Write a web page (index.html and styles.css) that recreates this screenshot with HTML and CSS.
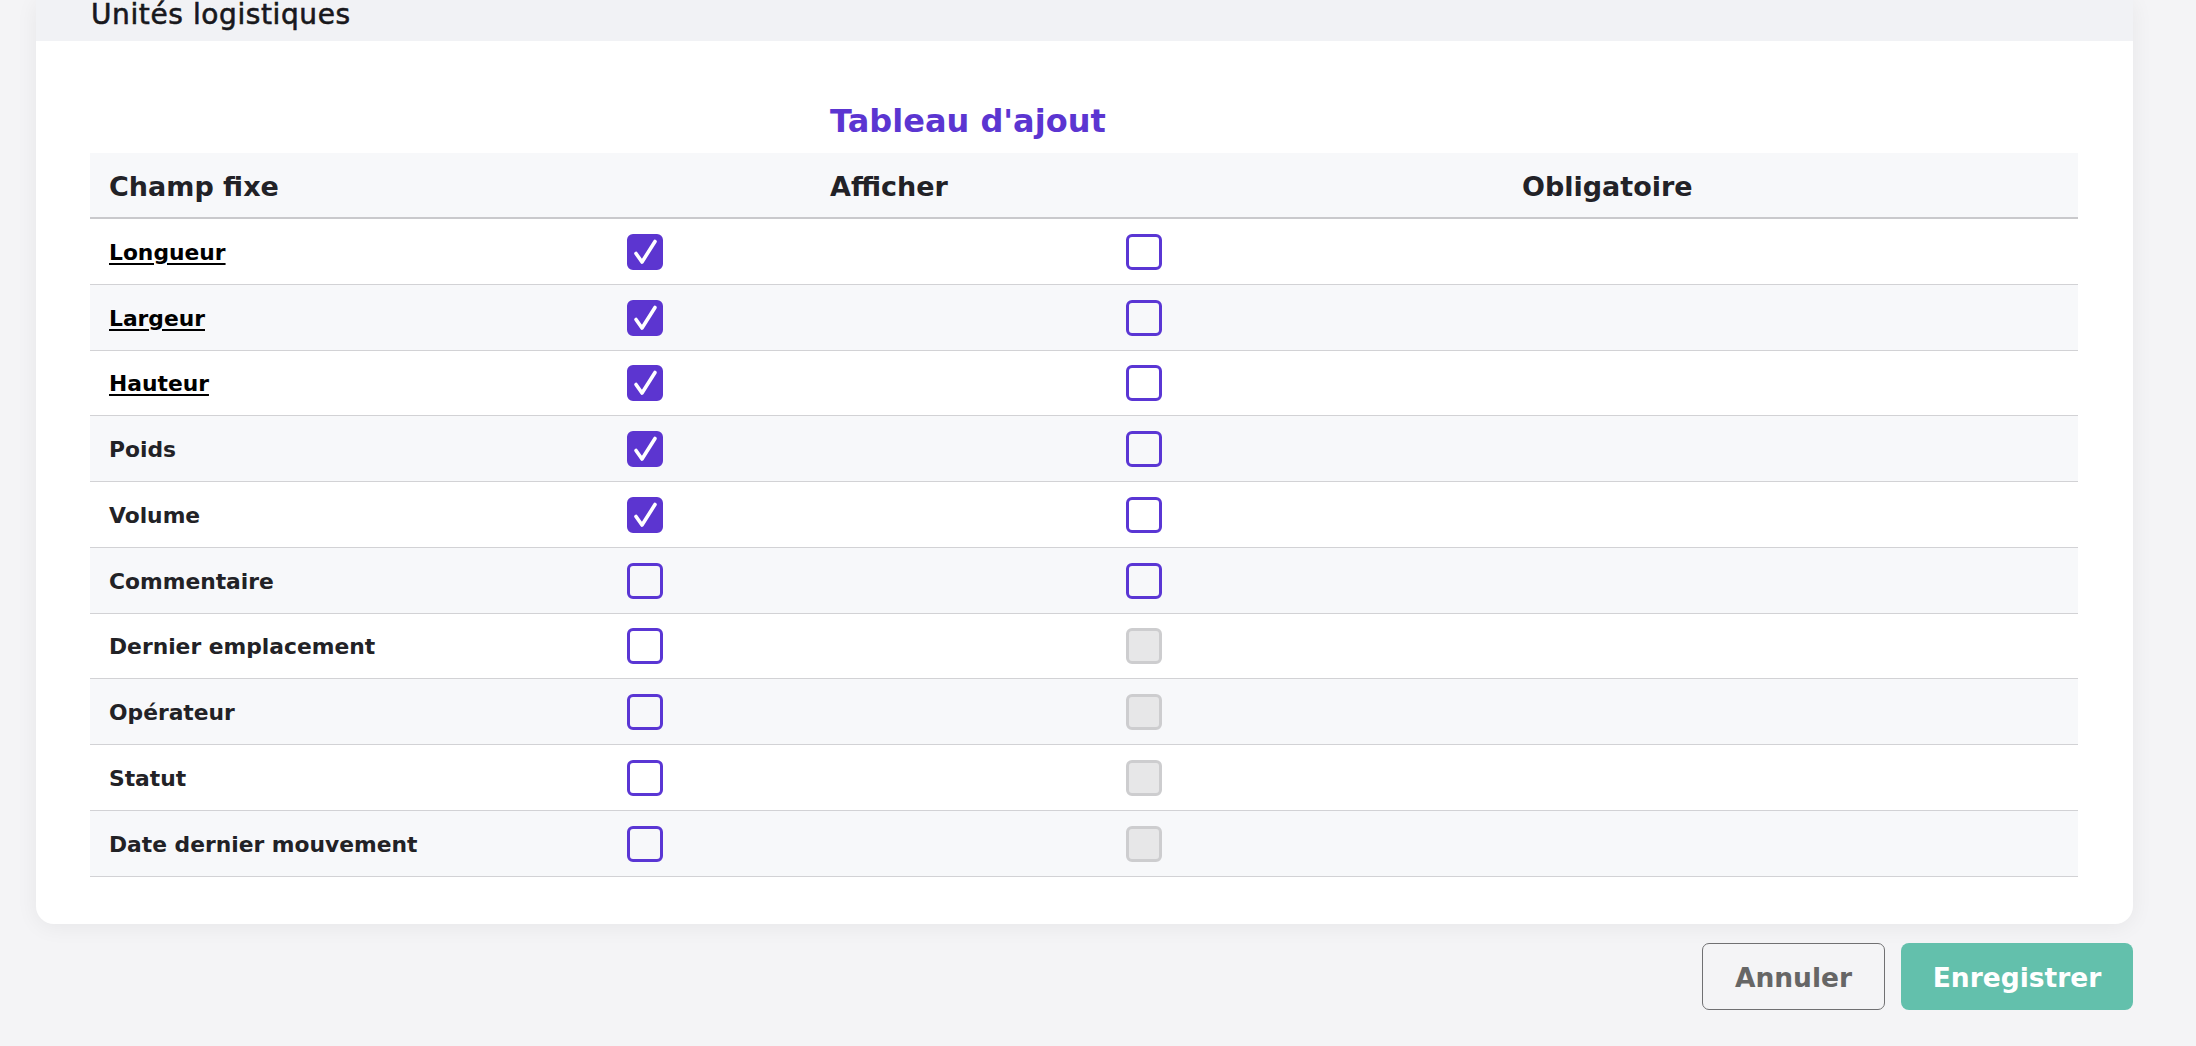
FILE: index.html
```html
<!DOCTYPE html>
<html lang="fr">
<head>
<meta charset="utf-8">
<title>Unités logistiques</title>
<link rel="stylesheet" href="styles.css">
</head>
<body>
<div class="page">
  <section class="card">
    <header class="card-head">Unités logistiques</header>
    <div class="card-body">
      <div class="title-row">
        <div></div>
        <h2 class="title">Tableau d'ajout</h2>
        <div></div>
      </div>
      <div class="thead">
        <div class="th">Champ fixe</div>
        <div class="th">Afficher</div>
        <div class="th">Obligatoire</div>
      </div>
      <div class="tbody">
        <div class="tr"><div class="td label"><span class="link">Longueur</span></div><div class="td box"><span class="cb checked"><svg viewBox="0 0 36 36"><path d="M9 19.5 L15 28 L28 7.5"/></svg></span></div><div class="td box"><span class="cb"></span></div></div>
        <div class="tr"><div class="td label"><span class="link">Largeur</span></div><div class="td box"><span class="cb checked"><svg viewBox="0 0 36 36"><path d="M9 19.5 L15 28 L28 7.5"/></svg></span></div><div class="td box"><span class="cb"></span></div></div>
        <div class="tr"><div class="td label"><span class="link">Hauteur</span></div><div class="td box"><span class="cb checked"><svg viewBox="0 0 36 36"><path d="M9 19.5 L15 28 L28 7.5"/></svg></span></div><div class="td box"><span class="cb"></span></div></div>
        <div class="tr"><div class="td label">Poids</div><div class="td box"><span class="cb checked"><svg viewBox="0 0 36 36"><path d="M9 19.5 L15 28 L28 7.5"/></svg></span></div><div class="td box"><span class="cb"></span></div></div>
        <div class="tr"><div class="td label">Volume</div><div class="td box"><span class="cb checked"><svg viewBox="0 0 36 36"><path d="M9 19.5 L15 28 L28 7.5"/></svg></span></div><div class="td box"><span class="cb"></span></div></div>
        <div class="tr"><div class="td label">Commentaire</div><div class="td box"><span class="cb"></span></div><div class="td box"><span class="cb"></span></div></div>
        <div class="tr"><div class="td label">Dernier emplacement</div><div class="td box"><span class="cb"></span></div><div class="td box"><span class="cb disabled"></span></div></div>
        <div class="tr"><div class="td label">Opérateur</div><div class="td box"><span class="cb"></span></div><div class="td box"><span class="cb disabled"></span></div></div>
        <div class="tr"><div class="td label">Statut</div><div class="td box"><span class="cb"></span></div><div class="td box"><span class="cb disabled"></span></div></div>
        <div class="tr"><div class="td label">Date dernier mouvement</div><div class="td box"><span class="cb"></span></div><div class="td box"><span class="cb disabled"></span></div></div>
      </div>
    </div>
  </section>
  <div class="actions">
    <button class="btn btn-cancel">Annuler</button>
    <button class="btn btn-save">Enregistrer</button>
  </div>
</div>
</body>
</html>
```

FILE: styles.css
```css
* { box-sizing: border-box; }

html, body {
  margin: 0;
  padding: 0;
}

body {
  background: #f4f4f6;
  font-family: "DejaVu Sans", "Noto Sans", sans-serif;
  color: #222226;
  overflow: hidden;
}

.page {
  padding: 0 63px 0 36px;
}

.card {
  background: #ffffff;
  border-radius: 0 0 18px 18px;
  box-shadow: 0 3px 22px rgba(0, 0, 0, 0.06);
}

.card-head {
  height: 41px;
  background: #f1f2f5;
  padding-left: 55px;
  font-size: 28px;
  line-height: 30px;
  letter-spacing: 0.6px;
  color: #18181c;
  -webkit-text-stroke: 0.6px #18181c;
}

.card-body {
  padding: 60px 55px 47px 54px;
}

.title-row {
  display: grid;
  grid-template-columns: 721px 692px 1fr;
  margin-bottom: 12px;
}

.title {
  margin: 0;
  padding-left: 19px;
  font-size: 32px;
  line-height: 40px;
  font-weight: 700;
  color: #5b35d1;
}

.thead {
  display: grid;
  grid-template-columns: 721px 692px 1fr;
  height: 66px;
  background: #f7f8fa;
  border-bottom: 2px solid #c9c9cc;
}

.th {
  display: flex;
  align-items: center;
  padding: 2px 0 0 19px;
  font-size: 27px;
  font-weight: 700;
  color: #222227;
}

.tr {
  display: grid;
  grid-template-columns: 518px 499px 1fr;
  height: 65.75px;
  border-bottom: 1px solid #d2d2d5;
}

.tr:nth-child(even) {
  background: #f7f8fa;
}

.td {
  display: flex;
  align-items: center;
  padding-left: 19px;
}

.label {
  padding-top: 2px;
  font-size: 21.8px;
  font-weight: 700;
  color: #222226;
}

.link {
  color: #000000;
  text-decoration: underline;
  text-decoration-thickness: 2px;
  text-underline-offset: 3px;
}

.box {
  padding-top: 1px;
}

.cb {
  display: block;
  width: 36px;
  height: 36px;
  border: 3px solid #5a36d4;
  border-radius: 6px;
}

.cb.checked {
  background: #5c35d0;
  border-color: #5c35d0;
}

.cb svg {
  display: block;
  width: 36px;
  height: 36px;
  margin: -3px;
}

.cb svg path {
  fill: none;
  stroke: #ffffff;
  stroke-width: 3.6;
  stroke-linecap: round;
  stroke-linejoin: round;
}

.cb.disabled {
  background: #e7e7e8;
  border-color: #cdcdcf;
}

.actions {
  display: flex;
  justify-content: flex-end;
  gap: 16px;
  margin-top: 19px;
}

.btn {
  height: 67px;
  padding: 3px 0 0;
  font-family: "DejaVu Sans", "Noto Sans", sans-serif;
  font-size: 26.5px;
  font-weight: 700;
  cursor: pointer;
}

.btn-cancel {
  width: 183px;
  background: transparent;
  border: 1px solid #707072;
  border-radius: 7px;
  color: #666666;
}

.btn-save {
  width: 232px;
  background: #63c0ac;
  border: none;
  border-radius: 8px;
  color: #ffffff;
}
```
